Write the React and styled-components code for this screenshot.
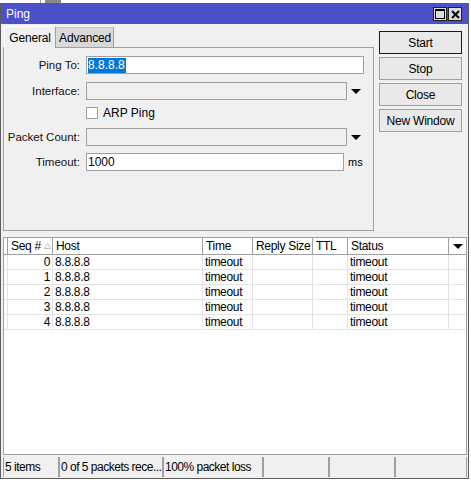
import React from 'react';
import styled, { createGlobalStyle } from 'styled-components';

const Global = createGlobalStyle`
  html, body { margin: 0; padding: 0; background: #fff; }
  body { font-family: "Liberation Sans", Arial, sans-serif; font-size: 11px; color: #000; }
  * { box-sizing: border-box; }
`;

const TopStrip = styled.div`
  height: 3px;
  display: flex;
  align-items: stretch;
  padding-left: 40px;
  gap: 4px;
`;
const StripLine = styled.div`
  width: ${p => p.$w}px;
  background: ${p => p.$c};
`;

const Window = styled.div`
  width: 469px;
  height: 476px;
  border: 1px solid #5c5c5c;
  background: #f0f0f0;
  display: flex;
  flex-direction: column;
`;

const TitleBar = styled.div`
  height: 20px;
  background: #4c50c9;
  color: #fff;
  font-size: 12px;
  display: flex;
  align-items: center;
  padding: 0 5px 0 5px;
`;
const Title = styled.div`
  flex: 1;
`;
const TitleButtons = styled.div`
  display: flex;
  gap: 1px;
  margin-right: 1px;
`;
const TitleBtn = styled.div`
  width: 14px;
  height: 14px;
  background: #dcdcdc;
  border: 1px solid #222;
  display: flex;
  align-items: center;
  justify-content: center;
`;

const Main = styled.div`
  flex: 1;
  display: flex;
  flex-direction: column;
  padding: 0 2px 0 2px;
`;

const Top = styled.div`
  display: flex;
  height: 207px;
`;

const LeftPane = styled.div`
  width: 371px;
  display: flex;
  flex-direction: column;
`;

const Tabs = styled.div`
  height: 23px;
  display: flex;
  align-items: flex-end;
  padding-left: 1px;
  position: relative;
  z-index: 1;
`;
const Tab = styled.div`
  height: ${p => (p.$active ? 22 : 20)}px;
  width: ${p => p.$w}px;
  display: flex;
  align-items: center;
  justify-content: center;
  font-size: 12px;
  letter-spacing: -0.2px;
  background: ${p => (p.$active ? '#f0f0f0' : '#d9d9d9')};
  border-top: 1px solid ${p => (p.$active ? '#fff' : '#c4c4c4')};
  border-left: 1px solid ${p => (p.$active ? '#fff' : '#d9d9d9')};
  border-right: 1px solid #a0a0a0;
  margin-bottom: ${p => (p.$active ? -1 : 0)}px;
`;

const Panel = styled.div`
  flex: 1;
  border: 1px solid #a0a0a0;
  padding-top: 8px;
  display: flex;
  flex-direction: column;
`;

const Row = styled.div`
  display: flex;
  align-items: center;
  height: ${p => p.$h || 18}px;
  margin-top: ${p => p.$mt || 0}px;
`;
const Label = styled.div`
  width: 76px;
  text-align: right;
  margin-right: 6px;
  white-space: nowrap;
  font-size: 11.5px;
  color: #111;
`;
const Input = styled.div`
  width: ${p => p.$w}px;
  height: 18px;
  border: 1px solid #a0a0a0;
  background: ${p => (p.$disabled ? '#f0f0f0' : '#fff')};
  display: flex;
  align-items: center;
  padding-left: 1px;
  font-size: 12px;
`;
const Selected = styled.span`
  background: #0078d7;
  color: #fff;
  line-height: 15px;
  padding: 0 1px 0 0;
`;
const Arrow = styled.div`
  width: 0;
  height: 0;
  border-left: 5px solid transparent;
  border-right: 5px solid transparent;
  border-top: 5px solid #000;
  margin-left: ${p => p.$ml || 0}px;
`;
const Unit = styled.div`
  margin-left: 4px;
`;
const Check = styled.div`
  width: 12px;
  height: 12px;
  background: #fff;
  border: 1px solid #a0a0a0;
  margin-left: 82px;
  margin-right: 5px;
`;
const CheckText = styled.div`
  font-size: 12px;
`;

const RightPane = styled.div`
  margin-left: 5px;
  width: 83px;
  padding-top: 7px;
  display: flex;
  flex-direction: column;
  gap: 3px;
`;
const Button = styled.div`
  height: 23px;
  border: 1px solid ${p => (p.$default ? '#1a1a1a' : '#a0a0a0')};
  background: #e9e9e9;
  display: flex;
  align-items: center;
  justify-content: center;
  font-size: 12px;
  letter-spacing: -0.2px;
`;

const Table = styled.div`
  margin-top: 6px;
  width: 464px;
  height: 218px;
  border: 1px solid #a0a0a0;
  background: #fff;
  display: flex;
  flex-direction: column;
`;
const cols = '4px 45px 150px 50px 60px 35px 101px 1fr';
const HeadRow = styled.div`
  display: grid;
  grid-template-columns: ${cols};
  grid-template-rows: 16px;
  height: 17px;
  border-bottom: 1px solid #a0a0a0;
  flex-shrink: 0;
`;
const HeadCell = styled.div`
  border-right: 1px solid #a0a0a0;
  display: flex;
  align-items: center;
  justify-content: ${p => (p.$center ? 'center' : 'flex-start')};
  padding-left: ${p => (p.$center ? 0 : 3)}px;
  white-space: nowrap;
  overflow: hidden;
  font-size: 12px;
  letter-spacing: -0.3px;
  &:last-child { border-right: none; }
`;
const SortMark = styled.svg`
  margin-left: 3px;
  flex-shrink: 0;
`;
const BodyRow = styled.div`
  display: grid;
  grid-template-columns: ${cols};
  grid-template-rows: 14px;
  height: 15px;
  border-bottom: 1px solid #e3e3e3;
  flex-shrink: 0;
`;
const Cell = styled.div`
  border-right: 1px solid #e3e3e3;
  display: flex;
  align-items: center;
  justify-content: ${p => (p.$right ? 'flex-end' : 'flex-start')};
  padding: 0 ${p => (p.$right ? 2 : 0)}px 0 ${p => (p.$right ? 0 : 2)}px;
  white-space: nowrap;
  overflow: hidden;
  font-size: 12px;
  letter-spacing: -0.3px;
  &:last-child { border-right: none; }
`;

const StatusBar = styled.div`
  margin-top: 2px;
  height: 20px;
  width: 464px;
  display: grid;
  grid-template-columns: 56px 104px 100px 66px 66px 1fr;
  border-left: 1px solid #a0a0a0;
`;
const StatusCell = styled.div`
  border-right: 2px solid #a0a0a0;
  display: flex;
  align-items: center;
  padding-left: 1px;
  font-size: 12px;
  letter-spacing: -0.5px;
  white-space: nowrap;
  overflow: hidden;
  &:last-child { border-right: 1px solid #a0a0a0; }
`;

const rows = [0, 1, 2, 3, 4];

export default function App() {
  return (
    <>
      <Global />
      <TopStrip>
        <StripLine $w={1} $c="#9a9a9a" />
        <StripLine $w={16} $c="#8a8a8a" />
      </TopStrip>
      <Window>
        <TitleBar>
          <Title>Ping</Title>
          <TitleButtons>
            <TitleBtn>
              <svg width="10" height="10" viewBox="0 0 10 10">
                <rect x="0.5" y="0.5" width="9" height="9" fill="none" stroke="#000" strokeWidth="1" />
                <rect x="0.5" y="0.5" width="9" height="1.5" fill="#000" />
              </svg>
            </TitleBtn>
            <TitleBtn>
              <svg width="9" height="9" viewBox="0 0 9 9">
                <path d="M1 1 L8 8 M8 1 L1 8" stroke="#000" strokeWidth="2" />
              </svg>
            </TitleBtn>
          </TitleButtons>
        </TitleBar>
        <Main>
          <Top>
            <LeftPane>
              <Tabs>
                <Tab $active $w={52}>General</Tab>
                <Tab $w={58}>Advanced</Tab>
              </Tabs>
              <Panel>
                <Row>
                  <Label>Ping To:</Label>
                  <Input $w={278}><Selected>8.8.8.8</Selected></Input>
                </Row>
                <Row $mt={8}>
                  <Label>Interface:</Label>
                  <Input $w={261} $disabled />
                  <Arrow $ml={4} />
                </Row>
                <Row $mt={6} $h={14}>
                  <Check />
                  <CheckText>ARP Ping</CheckText>
                </Row>
                <Row $mt={8}>
                  <Label>Packet Count:</Label>
                  <Input $w={261} $disabled />
                  <Arrow $ml={4} />
                </Row>
                <Row $mt={7}>
                  <Label>Timeout:</Label>
                  <Input $w={258}>1000</Input>
                  <Unit>ms</Unit>
                </Row>
              </Panel>
            </LeftPane>
            <RightPane>
              <Button $default>Start</Button>
              <Button>Stop</Button>
              <Button>Close</Button>
              <Button>New Window</Button>
            </RightPane>
          </Top>
          <Table>
            <HeadRow>
              <HeadCell />
              <HeadCell>
                Seq #
                <SortMark width="7" height="6" viewBox="0 0 7 6">
                  <path d="M3.5 0.5 L6.5 5.5 L0.5 5.5 Z" fill="none" stroke="#c0c0c0" strokeWidth="1" />
                </SortMark>
              </HeadCell>
              <HeadCell>Host</HeadCell>
              <HeadCell>Time</HeadCell>
              <HeadCell>Reply Size</HeadCell>
              <HeadCell>TTL</HeadCell>
              <HeadCell>Status</HeadCell>
              <HeadCell $center><Arrow /></HeadCell>
            </HeadRow>
            {rows.map(n => (
              <BodyRow key={n}>
                <Cell />
                <Cell $right>{n}</Cell>
                <Cell>8.8.8.8</Cell>
                <Cell>timeout</Cell>
                <Cell />
                <Cell />
                <Cell>timeout</Cell>
                <Cell />
              </BodyRow>
            ))}
          </Table>
          <StatusBar>
            <StatusCell>5 items</StatusCell>
            <StatusCell>0 of 5 packets rece...</StatusCell>
            <StatusCell>100% packet loss</StatusCell>
            <StatusCell />
            <StatusCell />
            <StatusCell />
          </StatusBar>
        </Main>
      </Window>
    </>
  );
}
